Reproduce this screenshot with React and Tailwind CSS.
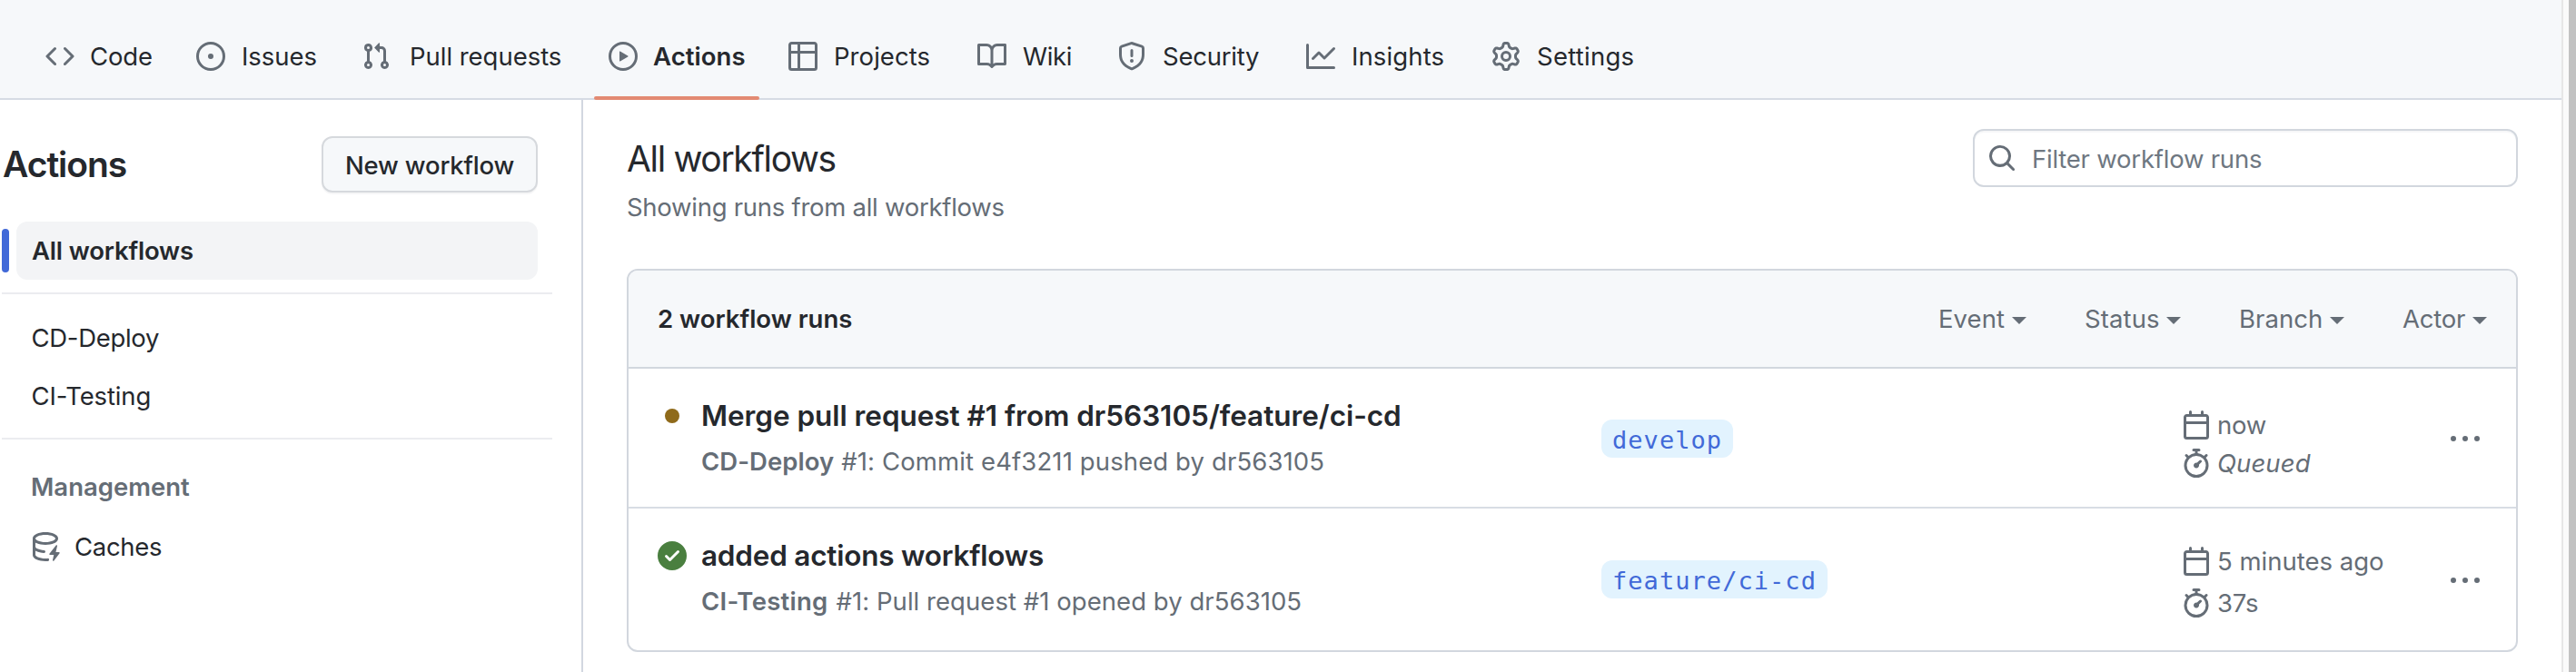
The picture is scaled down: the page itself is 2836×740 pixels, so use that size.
import React from "react";

const PATHS = {
  code: "m11.28 3.22 4.25 4.25a.75.75 0 0 1 0 1.06l-4.25 4.25a.749.749 0 0 1-1.275-.326.749.749 0 0 1 .215-.734L13.94 8l-3.72-3.72a.749.749 0 0 1 .326-1.275.749.749 0 0 1 .734.215Zm-6.56 0a.751.751 0 0 1 1.042.018.751.751 0 0 1 .018 1.042L2.06 8l3.72 3.72a.749.749 0 0 1-.326 1.275.749.749 0 0 1-.734-.215L.47 8.53a.75.75 0 0 1 0-1.06Z",
  issue: "M8 9.5a1.5 1.5 0 1 0 0-3 1.5 1.5 0 0 0 0 3ZM8 0a8 8 0 1 1 0 16A8 8 0 0 1 8 0ZM1.5 8a6.5 6.5 0 1 0 13 0 6.5 6.5 0 0 0-13 0Z",
  pull: "M1.5 3.25a2.25 2.25 0 1 1 3 2.122v5.256a2.251 2.251 0 1 1-1.5 0V5.372A2.25 2.25 0 0 1 1.5 3.25Zm5.677-.177L9.573.677A.25.25 0 0 1 10 .854V2.5h1A2.5 2.5 0 0 1 13.5 5v5.628a2.251 2.251 0 1 1-1.5 0V5a1 1 0 0 0-1-1h-1v1.646a.25.25 0 0 1-.427.177L7.177 3.427a.25.25 0 0 1 0-.354ZM3.75 2.5a.75.75 0 1 0 0 1.5.75.75 0 0 0 0-1.5Zm0 9.5a.75.75 0 1 0 0 1.5.75.75 0 0 0 0-1.5Zm8.25.75a.75.75 0 1 0 1.5 0 .75.75 0 0 0-1.5 0Z",
  play: "M8 0a8 8 0 1 1 0 16A8 8 0 0 1 8 0ZM1.5 8a6.5 6.5 0 1 0 13 0 6.5 6.5 0 0 0-13 0Zm4.879-2.773 4.264 2.559a.25.25 0 0 1 0 .428l-4.264 2.559A.25.25 0 0 1 6 10.559V5.442a.25.25 0 0 1 .379-.215Z",
  table: "M0 1.75C0 .784.784 0 1.75 0h12.5C15.216 0 16 .784 16 1.75v12.5A1.75 1.75 0 0 1 14.25 16H1.75A1.75 1.75 0 0 1 0 14.25ZM6.5 6.5v8h7.75a.25.25 0 0 0 .25-.25V6.5Zm8-1.5V1.75a.25.25 0 0 0-.25-.25H6.5V5Zm-13 1.5v7.75c0 .138.112.25.25.25H5v-8ZM5 5V1.5H1.75a.25.25 0 0 0-.25.25V5Z",
  book: "M0 1.75A.75.75 0 0 1 .75 1h4.253c1.227 0 2.317.59 3 1.501A3.743 3.743 0 0 1 11.006 1h4.245a.75.75 0 0 1 .75.75v10.5a.75.75 0 0 1-.75.75h-4.507a2.25 2.25 0 0 0-1.591.659l-.622.621a.75.75 0 0 1-1.06 0l-.622-.621A2.25 2.25 0 0 0 5.258 13H.75a.75.75 0 0 1-.75-.75Zm7.251 10.324.004-5.073-.002-2.253A2.25 2.25 0 0 0 5.003 2.5H1.5v9h3.757a3.75 3.75 0 0 1 1.994.574ZM8.755 4.75l-.004 7.322a3.752 3.752 0 0 1 1.992-.572H14.5v-9h-3.495a2.25 2.25 0 0 0-2.25 2.25Z",
  shield: "M7.467.133a1.748 1.748 0 0 1 1.066 0l5.25 1.68A1.75 1.75 0 0 1 15 3.48V7c0 1.566-.32 3.182-1.303 4.682-.983 1.498-2.585 2.813-5.032 3.855a1.697 1.697 0 0 1-1.33 0c-2.447-1.042-4.049-2.357-5.032-3.855C1.32 10.182 1 8.566 1 7V3.48a1.75 1.75 0 0 1 1.217-1.667Zm.61 1.429a.25.25 0 0 0-.153 0l-5.25 1.68a.25.25 0 0 0-.174.238V7c0 1.358.275 2.666 1.057 3.86.784 1.194 2.121 2.34 4.366 3.297a.196.196 0 0 0 .154 0c2.245-.956 3.582-2.104 4.366-3.298C13.225 9.666 13.5 8.36 13.5 7V3.48a.251.251 0 0 0-.174-.237l-5.25-1.68ZM8.75 4.75v3a.75.75 0 0 1-1.5 0v-3a.75.75 0 0 1 1.5 0ZM9 10.5a1 1 0 1 1-2 0 1 1 0 0 1 2 0Z",
  graph: "M1.5 1.75V13.5h13.75a.75.75 0 0 1 0 1.5H.75a.75.75 0 0 1-.75-.75V1.75a.75.75 0 0 1 1.5 0Zm14.28 2.53-5.25 5.25a.75.75 0 0 1-1.06 0L7 7.06 4.28 9.78a.751.751 0 0 1-1.042-.018.751.751 0 0 1-.018-1.042l3.25-3.25a.75.75 0 0 1 1.06 0L10 7.94l4.72-4.72a.751.751 0 0 1 1.042.018.751.751 0 0 1 .018 1.042Z",
  gear: "M8 0a8.2 8.2 0 0 1 .701.031C9.444.095 9.99.645 10.16 1.29l.288 1.107c.018.066.079.158.212.224.231.114.454.243.668.386.123.082.233.09.299.071l1.103-.303c.644-.176 1.392.021 1.82.63.27.385.506.792.704 1.218.315.675.111 1.422-.364 1.891l-.814.806c-.049.048-.098.147-.088.294.016.257.016.515 0 .772-.01.147.038.246.088.294l.814.806c.475.469.679 1.216.364 1.891a7.977 7.977 0 0 1-.704 1.217c-.428.61-1.176.807-1.82.63l-1.102-.302c-.067-.019-.177-.011-.3.071a5.909 5.909 0 0 1-.668.386c-.133.066-.194.158-.211.224l-.29 1.106c-.168.646-.715 1.196-1.458 1.26a8.006 8.006 0 0 1-1.402 0c-.743-.064-1.289-.614-1.458-1.26l-.289-1.106c-.018-.066-.079-.158-.212-.224a5.738 5.738 0 0 1-.668-.386c-.123-.082-.233-.09-.299-.071l-1.103.303c-.644.176-1.392-.021-1.82-.63a8.12 8.12 0 0 1-.704-1.218c-.315-.675-.111-1.422.363-1.891l.815-.806c.05-.048.098-.147.088-.294a6.214 6.214 0 0 1 0-.772c.01-.147-.038-.246-.088-.294l-.815-.806C.635 6.045.431 5.298.746 4.623a7.92 7.92 0 0 1 .704-1.217c.428-.61 1.176-.807 1.82-.63l1.102.302c.067.019.177.011.3-.071.214-.143.437-.272.668-.386.133-.066.194-.158.211-.224l.29-1.106C6.009.645 6.556.095 7.299.03 7.53.01 7.764 0 8 0Zm-.571 1.525c-.036.003-.108.036-.137.146l-.289 1.105c-.147.561-.549.967-.998 1.189-.173.086-.34.183-.5.29-.417.278-.97.423-1.529.27l-1.103-.303c-.109-.03-.175.016-.195.045-.22.312-.412.644-.573.99-.014.031-.021.11.059.19l.815.806c.411.406.562.957.53 1.456a4.709 4.709 0 0 0 0 .582c.032.499-.119 1.05-.53 1.456l-.815.806c-.081.08-.073.159-.059.19.162.346.353.677.573.989.02.03.085.076.195.046l1.102-.303c.56-.153 1.113-.008 1.53.27.161.107.328.204.501.29.447.222.85.629.997 1.189l.289 1.105c.029.109.101.143.137.146a6.6 6.6 0 0 0 1.142 0c.036-.003.108-.036.137-.146l.289-1.105c.147-.561.549-.967.998-1.189.173-.086.34-.183.5-.29.417-.278.97-.423 1.529-.27l1.103.303c.109.029.175-.016.195-.045.22-.313.411-.644.573-.99.014-.031.021-.11-.059-.19l-.815-.806c-.411-.406-.562-.957-.53-1.456a4.709 4.709 0 0 0 0-.582c-.032-.499.119-1.05.53-1.456l.815-.806c.081-.08.073-.159.059-.19a6.464 6.464 0 0 0-.573-.989c-.02-.03-.085-.076-.195-.046l-1.102.303c-.56.153-1.113.008-1.53-.27a4.44 4.44 0 0 0-.501-.29c-.447-.222-.85-.629-.997-1.189l-.289-1.105c-.029-.11-.101-.143-.137-.146a6.6 6.6 0 0 0-1.142 0ZM11 8a3 3 0 1 1-6 0 3 3 0 0 1 6 0ZM9.5 8a1.5 1.5 0 1 0-3.001.001A1.5 1.5 0 0 0 9.5 8Z",
  search: "M10.68 11.74a6 6 0 0 1-7.922-8.982 6 6 0 0 1 8.982 7.922l3.04 3.04a.749.749 0 0 1-.326 1.275.749.749 0 0 1-.734-.215ZM11.5 7a4.499 4.499 0 1 0-8.997 0A4.499 4.499 0 0 0 11.5 7Z",
  calendar: "M4.75 0a.75.75 0 0 1 .75.75V2h5V.75a.75.75 0 0 1 1.5 0V2h1.25c.966 0 1.75.784 1.75 1.75v10.5A1.75 1.75 0 0 1 13.25 16H2.75A1.75 1.75 0 0 1 1 14.25V3.75C1 2.784 1.784 2 2.75 2H4V.75A.75.75 0 0 1 4.75 0ZM2.5 7.5v6.75c0 .138.112.25.25.25h10.5a.25.25 0 0 0 .25-.25V7.5Zm10.75-4H2.75a.25.25 0 0 0-.25.25V6h11V3.75a.25.25 0 0 0-.25-.25Z",
  stopwatch: "M5.75.75A.75.75 0 0 1 6.5 0h3a.75.75 0 0 1 0 1.5h-.75v1l-.001.041a6.724 6.724 0 0 1 3.464 1.435l.007-.006.75-.75a.749.749 0 0 1 1.275.326.749.749 0 0 1-.215.734l-.75.75-.006.007a6.75 6.75 0 1 1-10.548 0L2.72 5.03l-.75-.75a.751.751 0 0 1 .018-1.042.751.751 0 0 1 1.042-.018l.75.75.007.006A6.72 6.72 0 0 1 7.25 2.541V1.5H6.5a.75.75 0 0 1-.75-.75ZM8 14.5a5.25 5.25 0 1 0-.001-10.501A5.25 5.25 0 0 0 8 14.5Zm.389-6.7 1.33-1.33a.75.75 0 1 1 1.061 1.06L9.45 8.861A1.503 1.503 0 0 1 8 10.75a1.499 1.499 0 1 1 .389-2.95Z",
  kebab: "M8 9a1.5 1.5 0 1 0 0-3 1.5 1.5 0 0 0 0 3ZM1.5 9a1.5 1.5 0 1 0 0-3 1.5 1.5 0 0 0 0 3Zm13 0a1.5 1.5 0 1 0 0-3 1.5 1.5 0 0 0 0 3Z",
  check: "M8 16A8 8 0 1 1 8 0a8 8 0 0 1 0 16Zm3.78-9.72a.751.751 0 0 0-.018-1.042.751.751 0 0 0-1.042-.018L6.75 9.19 5.28 7.72a.751.751 0 0 0-1.042.018.751.751 0 0 0-.018 1.042l2 2a.75.75 0 0 0 1.06 0Z",
  dot: "M8 4a4 4 0 1 1 0 8 4 4 0 0 1 0-8Z",
  cache: "M2.5 5.724V8c0 .248.238.7 1.169 1.159.874.43 2.144.745 3.62.822a.75.75 0 1 1-.078 1.498c-1.622-.085-3.102-.432-4.204-.975a5.565 5.565 0 0 1-.507-.28V12.5c0 .133.058.318.282.551.227.237.591.483 1.101.707 1.015.447 2.47.742 4.117.742.406 0 .802-.018 1.183-.052a.751.751 0 1 1 .134 1.494C8.89 15.98 8.45 16 8 16c-1.805 0-3.475-.32-4.721-.869-.623-.274-1.173-.619-1.579-1.041-.408-.425-.7-.964-.7-1.59v-9c0-.626.292-1.165.7-1.591.406-.42.956-.766 1.579-1.04C4.525.32 6.195 0 8 0c1.806 0 3.476.32 4.721.869.623.274 1.173.619 1.579 1.041.408.425.7.964.7 1.59 0 .626-.292 1.165-.7 1.591-.406.42-.956.766-1.578 1.04C11.475 6.68 9.805 7 8 7c-1.805 0-3.475-.32-4.721-.869a6.15 6.15 0 0 1-.779-.407Zm0-2.224c0 .133.058.318.282.551.227.237.591.483 1.101.707C4.898 5.205 6.353 5.5 8 5.5c1.646 0 3.101-.295 4.118-.742.508-.224.873-.471 1.1-.708.224-.232.282-.417.282-.55 0-.133-.058-.318-.282-.551-.227-.237-.591-.483-1.101-.707C11.102 1.795 9.647 1.5 8 1.5c-1.646 0-3.101.295-4.118.742-.508.224-.873.471-1.1.708-.224.232-.282.417-.282.55ZM14.49 7.582a.375.375 0 0 0-.66-.313l-3.625 4.625a.375.375 0 0 0 .295.606h2.127l-.619 2.922a.375.375 0 0 0 .666.304l3.125-4.125A.375.375 0 0 0 15.5 11h-1.778l.769-3.418Z",
};

function Icon({ name, className = "text-[#656d76]" }) {
  return (
    <svg viewBox="0 0 16 16" fill="currentColor" className={`size-8 shrink-0 ${className}`}>
      <path d={PATHS[name]} />
    </svg>
  );
}

const TABS = [
  { icon: "code", label: "Code", width: "w-[166px]", text: "ml-[17px] tracking-[-0.14px]" },
  { icon: "issue", label: "Issues", width: "w-[182px]", text: "ml-[18px] tracking-[-0.04px]" },
  { icon: "pull", label: "Pull requests", width: "w-[272px]", text: "ml-[21px] tracking-[-0.03px]" },
  { icon: "play", label: "Actions", width: "w-[198px]", text: "ml-[17px] font-semibold tracking-[0.07px]", active: true },
  { icon: "table", label: "Projects", width: "w-[208px]", text: "ml-[18px] tracking-[0.06px]" },
  { icon: "book", label: "Wiki", width: "w-[154px]", text: "ml-[18px] tracking-[-0.35px]" },
  { icon: "shield", label: "Security", width: "w-[208px]", text: "ml-[18px] tracking-[-0.23px]" },
  { icon: "graph", label: "Insights", width: "w-[204px]", text: "ml-[18px] tracking-[0.12px]" },
  { icon: "gear", label: "Settings", width: "w-[190px]", text: "ml-[18px] tracking-[0.25px]" },
];

function Header() {
  return (
    <header className="h-[110px] border-b-2 border-[#d6dbe4] bg-[#f6f8fa] pt-[14px] pl-[34px]">
      <nav className="flex h-[96px]">
        {TABS.map((t) => (
          <a key={t.label} className={`relative flex items-center pl-4 ${t.width}`}>
            <Icon name={t.icon} />
            <span className={`whitespace-nowrap ${t.text}`}>{t.label}</span>
            {t.active && <span className="absolute bottom-0 left-0 h-1 w-[182px] rounded-[2px] bg-[#e38a72]" />}
          </a>
        ))}
      </nav>
    </header>
  );
}

function Sidebar() {
  return (
    <aside className="w-[642px] shrink-0 border-r-2 border-[#d2d7e0] pt-[40px]">
      <div className="mr-[48px] ml-[3px] flex h-[62px] items-center justify-between">
        <h2 className="text-[39px] leading-[62px] font-semibold tracking-[-1.06px]">Actions</h2>
        <button className="flex h-[62px] w-[238px] items-center justify-center rounded-xl border-2 border-[#d6d9dd] bg-[#f6f8fa] pt-[2px] font-medium tracking-[-0.19px] shadow-[0_2px_0_rgba(31,35,40,0.04)]">
          New workflow
        </button>
      </div>
      <div className="mt-8 mr-[48px] ml-[2px] flex h-16 items-center">
        <span className="h-12 w-2 rounded-[4px] bg-[#4169d8]" />
        <a className="ml-2 flex h-16 flex-1 items-center rounded-xl bg-[#f3f4f6] pl-[17px] font-semibold tracking-[-0.17px]">All workflows</a>
      </div>
      <hr className="mt-[14px] mr-[32px] ml-[2px] border-t-2 border-[#ebecf0]" />
      <div className="mt-4 mb-[14px] pl-[34.5px] leading-[64px]">
        <a className="block tracking-[-0.3px]">CD-Deploy</a>
        <a className="block tracking-[-0.13px]">CI-Testing</a>
      </div>
      <hr className="mr-[32px] ml-[2px] border-t-2 border-[#ebecf0]" />
      <h3 className="mt-[20px] pl-[34px] leading-[64px] font-semibold text-[#656d76]">Management</h3>
      <a className="mt-[2px] flex h-16 items-center gap-4 pl-[34px] tracking-[-0.31px]">
        <Icon name="cache" />
        Caches
      </a>
    </aside>
  );
}

const FILTERS = [
  { label: "Event", cls: "w-[97px] tracking-[0.07px]" },
  { label: "Status", cls: "w-[106px] tracking-[0.11px]" },
  { label: "Branch", cls: "w-[116px] tracking-[0.05px]" },
  { label: "Actor", cls: "w-[93px] tracking-[-0.23px]" },
];

function Filter({ label, cls }) {
  return (
    <div className={`flex items-center justify-between ${cls}`}>
      {label}
      <svg viewBox="0 0 16 8" className="mt-[4px] h-2 w-4" fill="currentColor">
        <path d="M0 0h16L8 8z" />
      </svg>
    </div>
  );
}

const RUNS = [
  {
    icon: "dot", iconColor: "text-[#8f6a1a]",
    title: "Merge pull request #1 from dr563105/feature/ci-cd", titleCls: "tracking-[-0.05px]",
    flow: "CD-Deploy", flowCls: "tracking-[0.05px]",
    detail: "#1: Commit e4f3211 pushed by dr563105", detailCls: "ml-[8px] tracking-[0.12px]",
    branch: "develop", branchCls: "mt-[56px] w-[145px]",
    time: "now", timeCls: "tracking-[-0.27px]", duration: "Queued", durationCls: "italic tracking-[0.08px]",
    lines: "pt-[41px] leading-[42px]", height: "h-[154px] border-b-2 border-[#d8dde4]", menu: "mt-[62px]",
  },
  {
    icon: "check", iconColor: "text-[#4a7f3f]",
    title: "added actions workflows", titleCls: "tracking-[-0.22px]",
    flow: "CI-Testing", flowCls: "tracking-[0.26px]",
    detail: "#1: Pull request #1 opened by dr563105", detailCls: "ml-[9px] tracking-[0.05px]",
    branch: "feature/ci-cd", branchCls: "mt-[57px] w-[249px]",
    time: "5 minutes ago", timeCls: "", duration: "37s", durationCls: "tracking-[-0.23px]",
    lines: "pt-[35px] leading-[46px]", height: "h-[156px]", menu: "mt-[64px]",
  },
];

function Run({ r }) {
  return (
    <div className={`flex items-start pl-8 text-[#656d76] ${r.height}`}>
      <div className="flex w-[1039px] gap-4 pt-7">
        <Icon name={r.icon} className={`mt-2 ${r.iconColor}`} />
        <div className="whitespace-nowrap">
          <div className={`text-[31.5px] leading-[48px] font-semibold text-[#25282d] ${r.titleCls}`}>{r.title}</div>
          <div className="flex leading-[52px]">
            <span className={`font-semibold ${r.flowCls}`}>{r.flow}</span>
            <span className={r.detailCls}>{r.detail}</span>
          </div>
        </div>
      </div>
      <div className="w-[639px]">
        <div className={`h-[42px] rounded-xl bg-[#e2f3fe] pt-[3px] pl-3 font-['DejaVu_Sans_Mono',monospace] text-[27px] leading-[39px] tracking-[1.05px] text-[#4169d8] ${r.branchCls}`}>
          {r.branch}
        </div>
      </div>
      <div className={`w-[296px] ${r.lines}`}>
        <div className="flex items-center gap-[7px]">
          <Icon name="calendar" />
          <span className={r.timeCls}>{r.time}</span>
        </div>
        <div className="flex items-center gap-[7px]">
          <Icon name="stopwatch" />
          <span className={r.durationCls}>{r.duration}</span>
        </div>
      </div>
      <Icon name="kebab" className={r.menu} />
    </div>
  );
}

function Main() {
  return (
    <main className="flex-1 px-12 pt-8">
      <div className="flex items-start justify-between">
        <div>
          <h1 className="h-[66px] text-[39px] leading-[66px] tracking-[-1.33px]">All workflows</h1>
          <p className="leading-[40px] tracking-[-0.27px] text-[#656d76]">Showing runs from all workflows</p>
        </div>
        <div className="flex h-16 w-[600px] items-center rounded-xl border-2 border-[#d2d7de] bg-white pl-[14px] shadow-[inset_0_2px_0_rgba(208,215,222,0.2)]">
          <Icon name="search" />
          <span className="ml-[17px] pt-[2px] tracking-[-0.22px] text-[#6e7781]">Filter workflow runs</span>
        </div>
      </div>
      <section className="mt-12 overflow-hidden rounded-xl border-2 border-[#d2d7de]">
        <div className="flex h-[108px] items-center justify-between border-b-2 border-[#d2d7de] bg-[#f6f8fa] px-8">
          <span className="font-semibold">2 workflow runs</span>
          <div className="flex gap-16 text-[#656d76]">
            {FILTERS.map((f) => (
              <Filter key={f.label} {...f} />
            ))}
          </div>
        </div>
        {RUNS.map((r) => (
          <Run key={r.title} r={r} />
        ))}
      </section>
    </main>
  );
}

export default function App() {
  return (
    <div className="flex h-[740px] w-full overflow-hidden bg-white font-['Inter',sans-serif] text-[27.5px] leading-[40px] text-[#25282d]">
      <div className="flex flex-1 flex-col">
        <Header />
        <div className="flex flex-1">
          <Sidebar />
          <Main />
        </div>
      </div>
      <div className="flex w-4 border-l-2 border-[#e6e6e6] bg-[#fafafa]">
        <div className="ml-auto h-full w-2 bg-[#c2c2c2]" />
      </div>
    </div>
  );
}
